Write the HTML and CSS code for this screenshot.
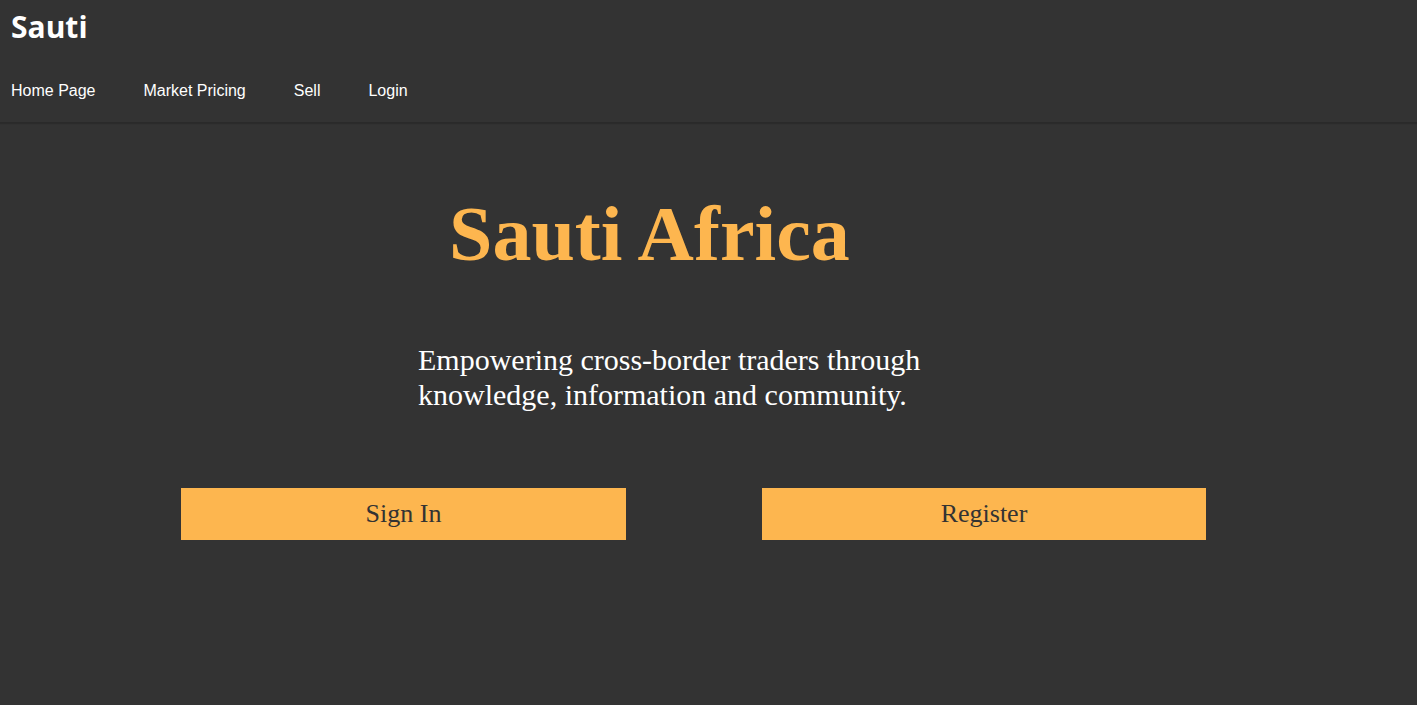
FILE: index.html
```html
<!DOCTYPE html>
<html lang="en">
<head>
<meta charset="utf-8">
<title>Sauti Africa</title>
<link rel="stylesheet" href="styles.css">
</head>
<body>
<header class="site-header">
  <div class="brand">Sauti</div>
  <nav class="nav">
    <a href="#">Home Page</a>
    <a href="#">Market Pricing</a>
    <a href="#">Sell</a>
    <a href="#">Login</a>
  </nav>
</header>
<main class="hero">
  <h1 class="hero-title">Sauti Africa</h1>
  <p class="hero-text">Empowering cross-border traders through<br>knowledge, information and community.</p>
  <div class="actions">
    <a class="btn btn-signin" href="#">Sign In</a>
    <a class="btn btn-register" href="#">Register</a>
  </div>
</main>
</body>
</html>
```

FILE: styles.css
```css
html, body {
  margin: 0;
  padding: 0;
  background: #333333;
  height: 100%;
}
body {
  font-family: "Liberation Serif", "Times New Roman", serif;
  color: #ffffff;
}
.site-header {
  display: flex;
  flex-direction: column;
  padding: 0 11px;
  height: 123px;
  box-sizing: border-box;
  border-bottom: 1px solid #2a2a2a;
  box-shadow: 0 1px 1px rgba(0,0,0,0.15);
}
.brand {
  font-family: "Open Sans", "Noto Sans", sans-serif;
  font-weight: 700;
  font-size: 30px;
  line-height: 1;
  padding-top: 12px;
  color: #ffffff;
}
.nav {
  display: flex;
  gap: 48px;
  margin-top: 40px;
}
.nav a {
  font-family: "Liberation Sans", Arial, sans-serif;
  font-size: 16px;
  color: #ffffff;
  text-decoration: none;
}
.hero {
  display: flex;
  flex-direction: column;
}
.hero-title {
  margin: 72px 0 0 449px;
  font-size: 78px;
  line-height: 1;
  font-weight: 700;
  color: #fdb64f;
}
.hero-text {
  margin: 70px 0 0 418px;
  font-size: 30px;
  line-height: 34.5px;
}
.actions {
  display: flex;
  gap: 136px;
  margin: 76px 0 0 181px;
}
.btn {
  display: flex;
  align-items: center;
  justify-content: center;
  width: 445px;
  height: 52px;
  background: #fdb64f;
  color: #333333;
  font-size: 26px;
  text-decoration: none;
}
.btn-register {
  width: 444px;
}
```
